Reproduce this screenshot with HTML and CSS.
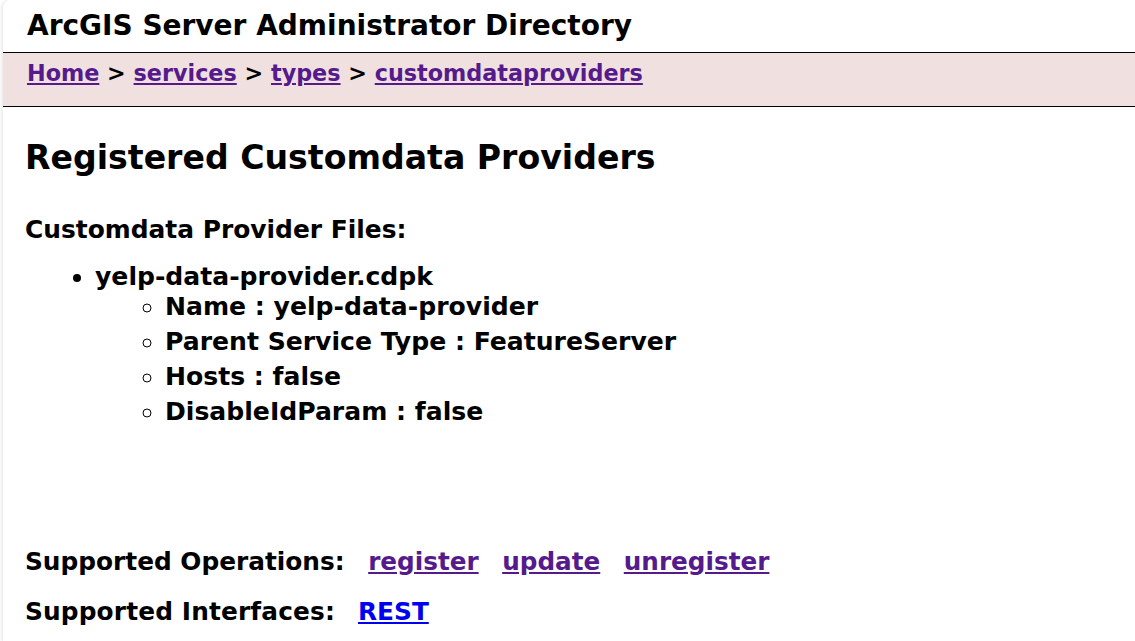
FILE: index.html
```html
<!DOCTYPE html>
<html>
<head>
<meta charset="utf-8">
<link rel="stylesheet" href="styles.css">
</head>
<body>
<div class="frame">
  <div class="title">ArcGIS Server Administrator Directory</div>
  <div class="crumbs">
    <a class="v" href="#">Home</a> &gt; <a class="v" href="#">services</a> &gt; <a class="v" href="#">types</a> &gt; <a class="v" href="#">customdataproviders</a>
  </div>
  <div class="content">
    <h2 class="heading">Registered Customdata Providers</h2>
    <div class="sub">Customdata Provider Files:</div>
    <ul class="files">
      <li><span class="file">yelp-data-provider.cdpk</span>
        <ul class="props">
          <li>Name : yelp-data-provider</li>
          <li>Parent Service Type : FeatureServer</li>
          <li>Hosts : false</li>
          <li>DisableIdParam : false</li>
        </ul>
      </li>
    </ul>
    <div class="ops"><span>Supported Operations:</span><a class="v" href="#">register</a><a class="v" href="#">update</a><a class="v" href="#">unregister</a></div>
    <div class="ifaces"><span>Supported Interfaces:</span><a class="u" href="#">REST</a></div>
  </div>
</div>
</body>
</html>
```
FILE: styles.css
```css
html, body {
  margin: 0;
  padding: 0;
  background: #ffffff;
}
body {
  font-family: "DejaVu Sans", Verdana, sans-serif;
  font-weight: bold;
  color: #000;
}
.frame {
  margin-left: 3px;
  border-top-left-radius: 8px;
  box-shadow: -2px 0 3px rgba(0,0,0,0.08);
  height: 641px;
  overflow: hidden;
}
.title {
  font-size: 28px;
  line-height: 51px;
  height: 53px;
  box-sizing: border-box;
  padding-left: 24px;
  border-bottom: 1px solid #000;
}
.crumbs {
  background: #f0e0e0;
  height: 54px;
  border-bottom: 1px solid #000;
  padding-left: 24px;
  font-size: 22.3px;
  line-height: 41px;
  box-sizing: border-box;
}
a.v { color: #551a8b; }
a.u { color: #0000ee; }
.content {
  padding-left: 22px;
}
.heading {
  font-size: 33.15px;
  margin: 31px 0 0 0;
  line-height: 40px;
}
.sub {
  font-size: 24.9px;
  margin-top: 37px;
  line-height: 30px;
}
.files {
  margin: 19px 0 0 0;
  padding-left: 70px;
  font-size: 25.1px;
  line-height: 25px;
}
.props {
  padding-left: 70px;
  margin: 0;
  list-style-type: circle;
  line-height: 35px;
}
.ops, .ifaces {
  display: flex;
  font-size: 24.8px;
  line-height: 30px;
}
.ops {
  gap: 23.5px;
  margin-top: 118px;
}
.ops a {
  font-size: 24.7px;
}
.ifaces {
  margin-top: 20px;
  gap: 23px;
}
.ifaces span {
  letter-spacing: 0.15px;
}
```
